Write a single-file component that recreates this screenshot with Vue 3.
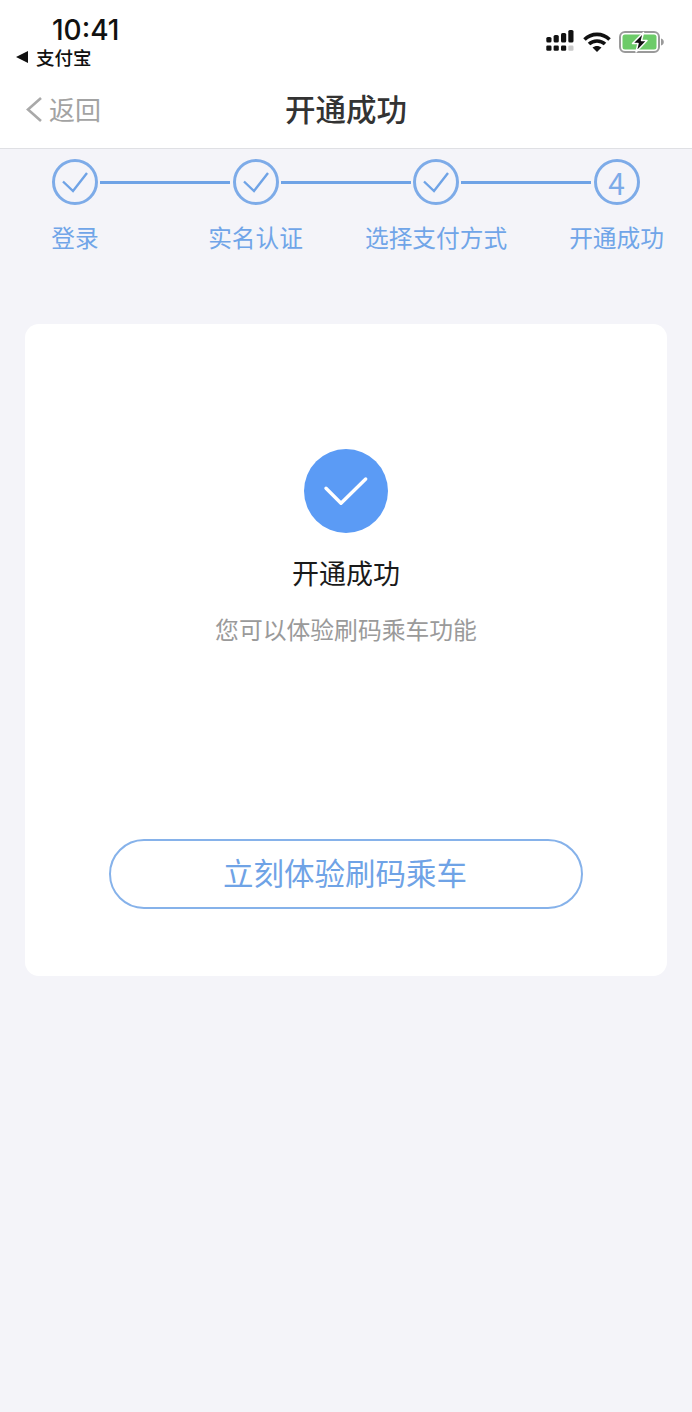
<script setup>
const steps = [
  { label: '登录', done: true },
  { label: '实名认证', done: true },
  { label: '选择支付方式', done: true },
  { label: '开通成功', done: false, num: 4 },
]
const signal = [
  { x: 0.3, top: 7, h: 5.5 },
  { x: 7.6, top: 5, h: 7.5 },
  { x: 15, top: 3, h: 9.5 },
  { x: 22.3, top: 0, h: 12.5 },
]
</script>

<template>
  <main class="page">
    <header class="head">
      <div class="status">
        <div class="status-left">
          <div class="time">10:41</div>
          <div class="from"><span class="tri"></span>支付宝</div>
        </div>
        <div class="status-right">
          <svg class="signal" width="28" height="21" viewBox="0 0 28 21">
            <g v-for="(s, i) in signal" :key="i">
              <rect :x="s.x" :y="s.top" width="5.2" :height="s.h" rx="1.6" fill="#111" />
              <rect :x="s.x" y="15.5" width="5.2" height="5.2" rx="1.2" :fill="i === 3 ? '#c9c9c9' : '#111'" />
            </g>
          </svg>
          <svg class="wifi" width="28" height="20" viewBox="0 0 28 20">
            <path d="M1.500 7.500C8.500 .6 19.500 .6 26.500 7.500" fill="none" stroke="#111" stroke-width="3.600" />
            <path d="M6 12c4.400-4.100 11.600-4.100 16 0" fill="none" stroke="#111" stroke-width="3.600" />
            <path d="M9.500 15.600c2.600-2.200 6.400-2.200 9 0L14 20z" fill="#111" />
          </svg>
          <svg class="battery" width="45" height="22" viewBox="0 0 45 22">
            <rect x="1" y="1" width="39" height="20" rx="5" fill="none" stroke="#9a9a9a" stroke-width="2" />
            <rect x="3.500" y="3.500" width="34" height="15" rx="2.500" fill="#6ccb68" />
            <path d="M42 7.500c1.800.4 2.800 1.800 2.800 3.500s-1 3.100-2.800 3.500z" fill="#9a9a9a" />
            <path d="M24.500 1.500 13.500 12.500h5.500l-2 8.500 11-11.500h-5.500z" fill="#111" stroke="#fff" stroke-width="1.500" stroke-linejoin="round" />
          </svg>
        </div>
      </div>
      <nav class="nav">
        <a class="back">
          <svg width="18" height="27" viewBox="0 0 18 27">
            <path d="M16 2 3 13.500 16 25" fill="none" stroke="#a9a9a9" stroke-width="2.600" />
          </svg>
          <span>返回</span>
        </a>
        <h1 class="nav-title">开通成功</h1>
      </nav>
    </header>

    <section class="steps">
      <template v-for="(step, i) in steps" :key="step.label">
        <div class="step">
          <div class="dot">
            <svg v-if="step.done" width="46" height="46" viewBox="0 0 46 46">
              <path d="M11 22.500 21 32 35 14" fill="none" stroke="#6fa3e6" stroke-width="2.400" />
            </svg>
            <span v-else>{{ step.num }}</span>
          </div>
          <div class="step-label">{{ step.label }}</div>
        </div>
        <div v-if="i < steps.length - 1" class="line"></div>
      </template>
    </section>

    <section class="card">
      <div class="ok">
        <svg width="84" height="84" viewBox="0 0 84 84">
          <path d="M22 39.300 37 54.300 61.700 30" fill="none" stroke="#fff" stroke-width="3.400" stroke-linecap="round" stroke-linejoin="round" />
        </svg>
      </div>
      <h2 class="card-title">开通成功</h2>
      <p class="card-sub">您可以体验刷码乘车功能</p>
      <button class="go">立刻体验刷码乘车</button>
    </section>
  </main>
</template>

<style>
html, body {
  margin: 0;
  background: #f4f4f9;
}
</style>

<style scoped>
* {
  box-sizing: border-box;
}

.page {
  width: 692px;
  height: 1412px;
  overflow: hidden;
  background: #f4f4f9;
  font-family: "Noto Sans CJK SC", "Noto Sans", sans-serif;
}

.head {
  height: 149px;
  background: #fff;
  border-bottom: 1px solid #dfe0e4;
}

.status {
  height: 73px;
  display: flex;
  justify-content: space-between;
}

.status-left {
  padding: 14px 0 0 16px;
}

.time {
  margin-left: 36px;
  font-family: Inter, sans-serif;
  font-size: 28px;
  font-weight: 500;
  line-height: 32px;
  color: #111;
}

.from {
  display: flex;
  align-items: center;
  height: 22px;
  font-size: 18.500px;
  font-weight: 500;
  line-height: 22px;
  color: #111;
}

.tri {
  width: 0;
  height: 0;
  margin-right: 8px;
  border-top: 6px solid transparent;
  border-bottom: 6px solid transparent;
  border-right: 12px solid #111;
}

.status-right {
  display: flex;
  align-items: flex-start;
  padding: 30px 0 0 546px;
  position: absolute;
  left: 0;
}

.signal {
  margin-right: 9px;
}

.wifi {
  margin-top: 2px;
  margin-right: 8px;
}

.battery {
  margin-top: 1px;
}

.nav {
  height: 75px;
  display: flex;
  align-items: center;
  justify-content: center;
  position: relative;
}

.back {
  position: absolute;
  left: 25px;
  top: 21px;
  display: flex;
  align-items: center;
  gap: 6px;
  font-size: 26px;
  line-height: 30px;
  color: #a3a3a3;
}

.nav-title {
  margin: 0;
  font-size: 30.500px;
  font-weight: 500;
  line-height: 40px;
  color: #333;
  transform: translateY(-3px);
}

.steps {
  display: flex;
  padding: 10px 0 0 52px;
  height: 175px;
}

.step {
  width: 46px;
  display: flex;
  flex-direction: column;
  align-items: center;
  flex: none;
}

.dot {
  width: 46px;
  height: 46px;
  flex: none;
  display: flex;
  align-items: center;
  justify-content: center;
  border: 3px solid #7dabe8;
  border-radius: 50%;
  font-size: 30px;
  color: #7dabe8;
  overflow: hidden;
}

.dot svg {
  flex: none;
}

.step-label {
  margin-top: 15px;
  font-size: 23.700px;
  line-height: 34px;
  white-space: nowrap;
  color: #70a5e8;
}

.line {
  width: 130px;
  height: 3px;
  margin: 22px 2.250px 0;
  flex: none;
  background: #6fa3e6;
}

.card {
  width: 642px;
  height: 652px;
  margin-left: 25px;
  padding-top: 125px;
  display: flex;
  flex-direction: column;
  align-items: center;
  background: #fff;
  border-radius: 14px;
}

.ok {
  width: 84px;
  height: 84px;
  flex: none;
  border-radius: 50%;
  background: #5b9bf5;
}

.ok svg {
  display: block;
}

.card-title {
  margin: 20px 0 0;
  font-size: 27px;
  font-weight: 400;
  line-height: 40px;
  color: #1a1a1a;
}

.card-sub {
  margin: 19px 0 0;
  font-size: 23.800px;
  line-height: 34px;
  color: #9a9a9a;
}

.go {
  width: 474px;
  height: 70px;
  margin-top: 193px;
  padding: 0 2px 5px 0;
  flex: none;
  border: 2px solid #86b2ea;
  border-radius: 35px;
  background: #fff;
  font-family: inherit;
  font-size: 30.500px;
  color: #6fa3e6;
}
</style>
